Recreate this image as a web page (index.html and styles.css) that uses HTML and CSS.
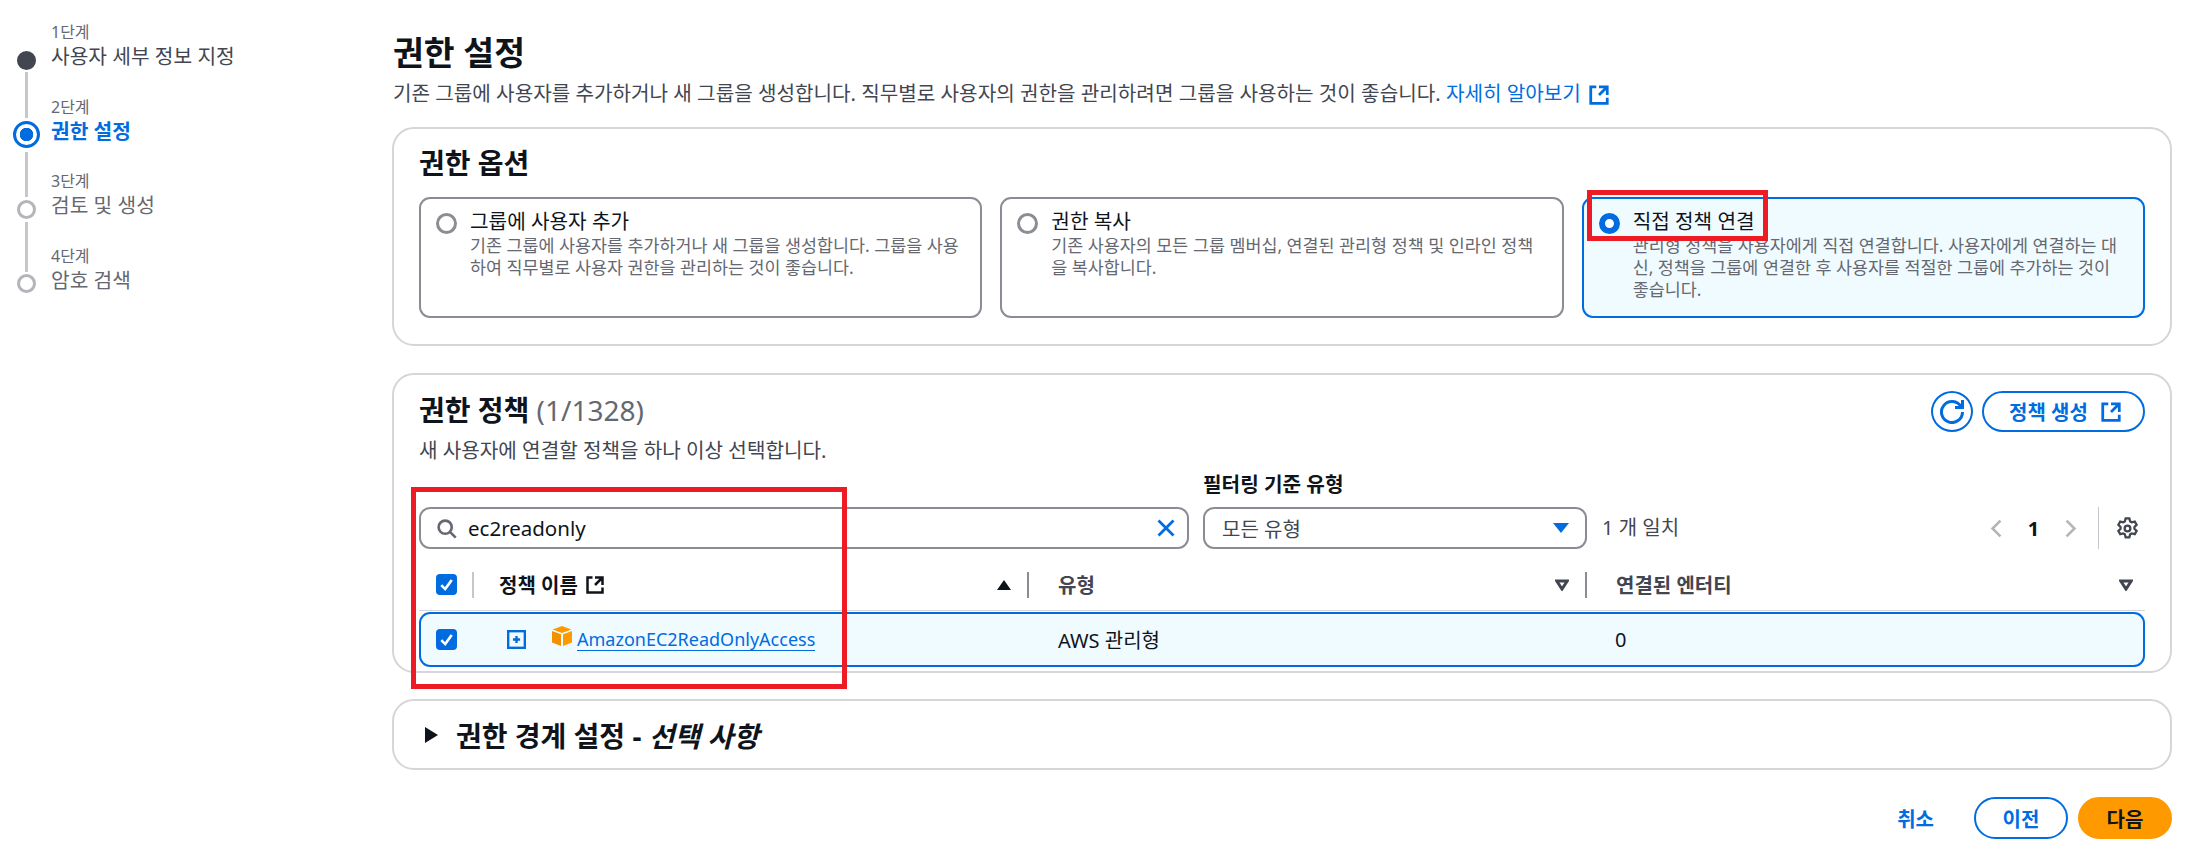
FILE: index.html
```html
<!DOCTYPE html>
<html lang="ko">
<head>
<meta charset="utf-8">
<title>권한 설정</title>
<link rel="stylesheet" href="styles.css">
</head>
<body>
<div class="page">
  <nav class="nav">
    <div class="step done">
      <div class="marker"><span class="line hidden"></span><span class="slot"><span class="dot"></span></span></div>
      <div class="step-text"><div class="step-label">1단계</div><div class="step-title">사용자 세부 정보 지정</div></div>
    </div>
    <div class="step current">
      <div class="marker"><span class="line"></span><span class="slot"><span class="dot"></span></span></div>
      <div class="step-text"><div class="step-label">2단계</div><div class="step-title">권한 설정</div></div>
    </div>
    <div class="step after-current">
      <div class="marker"><span class="line"></span><span class="slot"><span class="dot"></span></span></div>
      <div class="step-text"><div class="step-label">3단계</div><div class="step-title">검토 및 생성</div></div>
    </div>
    <div class="step">
      <div class="marker"><span class="line"></span><span class="slot"><span class="dot"></span></span></div>
      <div class="step-text"><div class="step-label">4단계</div><div class="step-title">암호 검색</div></div>
    </div>
  </nav>

  <main class="main">
    <h1 class="page-title">권한 설정</h1>
    <p class="page-sub">기존 그룹에 사용자를 추가하거나 새 그룹을 생성합니다. 직무별로 사용자의 권한을 관리하려면 그룹을 사용하는 것이 좋습니다. <a class="link">자세히 알아보기</a>
      <svg class="ext ext-link" viewBox="0 0 16 16"><path d="M14 8V2H8M14 2 8 8M6 2H2v12h12v-4"/></svg></p>

    <section class="card options">
      <h2 class="card-title">권한 옵션</h2>
      <div class="tiles">
        <div class="tile">
          <span class="radio"></span>
          <div><div class="tile-title">그룹에 사용자 추가</div><div class="tile-desc">기존 그룹에 사용자를 추가하거나 새 그룹을 생성합니다. 그룹을 사용하여 직무별로 사용자 권한을 관리하는 것이 좋습니다.</div></div>
        </div>
        <div class="tile">
          <span class="radio"></span>
          <div><div class="tile-title">권한 복사</div><div class="tile-desc">기존 사용자의 모든 그룹 멤버십, 연결된 관리형 정책 및 인라인 정책을 복사합니다.</div></div>
        </div>
        <div class="tile selected">
          <span class="radio"></span>
          <div><div class="tile-title">직접 정책 연결</div><div class="tile-desc">관리형 정책을 사용자에게 직접 연결합니다. 사용자에게 연결하는 대신, 정책을 그룹에 연결한 후 사용자를 적절한 그룹에 추가하는 것이 좋습니다.</div></div>
        </div>
      </div>
    </section>

    <section class="card policies">
      <div class="policies-head">
        <div>
          <h2 class="card-title">권한 정책 <span class="count">(1/1328)</span></h2>
          <p class="card-sub">새 사용자에 연결할 정책을 하나 이상 선택합니다.</p>
        </div>
        <div class="head-actions">
          <button class="btn btn-icon"><svg class="ext refresh" viewBox="0 0 16 16"><path d="M10 5h5V0M15 8a7 7 0 1 1-1-3.6"/></svg></button>
          <button class="btn btn-create">정책 생성 <svg class="ext" viewBox="0 0 16 16"><path d="M14 8V2H8M14 2 8 8M6 2H2v12h12v-4"/></svg></button>
        </div>
      </div>

      <div class="toolbar">
        <div class="field search">
          <svg class="search-icon" viewBox="0 0 16 16"><circle cx="7" cy="7" r="5"/><path d="m11 11 4 4"/></svg>
          <span class="search-value">ec2readonly</span>
          <svg class="clear-icon" viewBox="0 0 16 16"><path d="m2 2 12 12M14 2 2 14"/></svg>
        </div>
        <div class="filter">
          <label class="filter-label">필터링 기준 유형</label>
          <div class="field select"><span>모든 유형</span><span class="select-caret"></span></div>
        </div>
        <span class="matches">1 개 일치</span>
        <div class="pager">
          <svg class="chev" viewBox="0 0 16 16"><path d="m11 2-6 6 6 6"/></svg>
          <span class="page-num">1</span>
          <svg class="chev" viewBox="0 0 16 16"><path d="m5 2 6 6-6 6"/></svg>
          <span class="pager-sep"></span>
          <svg class="gear" viewBox="0 0 16 16"><path d="M6.73 1h2.54l.6 2.07 1.1.64 2.1-.52 1.27 2.2-1.5 1.55v1.27l1.5 1.55-1.27 2.2-2.1-.52-1.1.64-.6 2.07H6.73l-.6-2.07-1.1-.64-2.1.52-1.27-2.2 1.5-1.55V6.94l-1.5-1.55 1.27-2.2 2.1.52 1.1-.64z"/><circle cx="8" cy="8" r="2"/></svg>
        </div>
      </div>

      <div class="thead">
        <div class="col-check"><span class="checkbox"><svg viewBox="0 0 16 16"><path d="m4 8.5 3 3 5-7"/></svg></span><span class="sep sep-light"></span></div>
        <div class="col col-name"><span class="th dark">정책 이름</span><svg class="ext ext-th" viewBox="0 0 16 16"><path d="M14 8V2H8M14 2 8 8M6 2H2v12h12v-4"/></svg><span class="sort-up"></span><span class="sep"></span></div>
        <div class="col col-type"><span class="th">유형</span><svg class="sort-down" viewBox="0 0 12 10"><path d="M1.5 1.5h9L6 8.5z"/></svg><span class="sep"></span></div>
        <div class="col col-ent"><span class="th">연결된 엔터티</span><svg class="sort-down" viewBox="0 0 12 10"><path d="M1.5 1.5h9L6 8.5z"/></svg></div>
      </div>
      <div class="trow">
        <div class="col-check"><span class="checkbox"><svg viewBox="0 0 16 16"><path d="m4 8.5 3 3 5-7"/></svg></span></div>
        <div class="cell cell-name">
          <svg class="expand" viewBox="0 0 16 16"><rect x="1" y="1" width="14" height="14"/><path d="M8 5v6M5 8h6"/></svg>
          <svg class="cube" viewBox="0 0 22 22"><path fill="#f90" d="M11 1 20.5 4.6 11 8 1.5 4.6z"/><path fill="#f29100" d="M1 6 10 9.3V21L1 17.4z"/><path fill="#f90" d="M21 6 12 9.3V21l9-3.6z"/></svg>
          <a class="policy-link">AmazonEC2ReadOnlyAccess</a>
        </div>
        <div class="cell cell-type">AWS 관리형</div>
        <div class="cell cell-ent">0</div>
      </div>
    </section>

    <section class="card boundary">
      <span class="caret-right"></span>
      <h2 class="boundary-title">권한 경계 설정 - <em>선택 사항</em></h2>
    </section>

    <div class="footer">
      <a class="cancel">취소</a>
      <button class="btn btn-prev">이전</button>
      <button class="btn btn-next">다음</button>
    </div>
  </main>
</div>
<div class="mark mark-tile"></div>
<div class="mark mark-table"></div>
</body>
</html>
```
FILE: styles.css
```css
* { box-sizing: border-box; }
html, body { margin: 0; height: 100%; background: #fff; overflow: hidden; }
body { font-family: "Noto Sans", "Noto Sans CJK KR", sans-serif; color: #0f141a; font-size: 20px; }
h1, h2, p { margin: 0; }
button { font-family: inherit; cursor: pointer; padding: 0; }

.page { display: flex; height: 866px; }

.nav { width: 392px; flex: none; }
.step { display: flex; height: 74.67px; }
.step:first-child { height: 70px; }
.marker { width: 26px; margin-left: 13px; margin-right: 12px; display: flex; flex-direction: column; align-items: center; }
.line { flex: 1; width: 3px; background: #c6c6cd; margin-top: 3px; margin-bottom: 2px; }
.line.hidden { visibility: hidden; }
.current .line { margin-top: 2px; margin-bottom: 7px; }
.after-current .line { margin-top: 7px; }
.slot { height: 20px; flex: none; display: flex; align-items: center; justify-content: center; }
.dot { width: 19px; height: 19px; flex: none; border-radius: 50%; border: 3px solid #b4b4bb; background: #fff; }
.done .dot { background: #424650; border-color: #424650; }
.current .dot { width: 27px; height: 27px; border: 3px solid #006ce0; background: radial-gradient(circle, #006ce0 0 6.5px, #fff 7px); }
.step-text { padding-bottom: 2px; align-self: flex-end; white-space: nowrap; }
.step-label { font-size: 16px; line-height: 24px; color: #656871; }
.step-title { font-size: 20.3px; line-height: 24px; color: #656871; }
.done .step-title { color: #424650; }
.current .step-title { color: #006ce0; font-weight: 700; }

.main { flex: 1; padding-right: 34px; min-width: 0; }
.page-title { font-size: 33.5px; font-weight: 700; line-height: 40px; margin-top: 32px; padding-left: 1px; }
.page-sub { font-size: 20.15px; line-height: 26px; color: #424650; margin-top: 8px; height: 47px; white-space: nowrap; padding-left: 1px; }
.link { color: #006ce0; }
.ext { width: 22px; height: 22px; fill: none; stroke: currentColor; stroke-width: 2; flex: none; }
.ext-link { color: #006ce0; vertical-align: -5px; margin-left: 2px; }

.card { border: 2px solid #d5d5da; border-radius: 22px; background: #fff; }
.options { height: 219px; padding: 17px 25px 0; }
.card-title { font-size: 28px; font-weight: 700; line-height: 34px; }
.tiles { display: grid; grid-template-columns: repeat(3, 1fr); gap: 18px; margin-top: 17px; }
.tile { display: flex; gap: 13px; border: 2px solid #8c8c94; border-radius: 11px; padding: 9px 15px 16px; }
.tile.selected { border-color: #006ce0; background: #f0fbff; }
.radio { width: 21px; height: 21px; flex: none; margin-top: 5px; border-radius: 50%; border: 3px solid #8c8c94; background: #fff; }
.selected .radio { border: 6.5px solid #006ce0; }
.tile-title { font-size: 20.2px; line-height: 26px; }
.tile-desc { font-size: 17.4px; line-height: 22px; color: #656871; }

.policies { height: 300px; margin-top: 27px; padding: 18px 25px 0; }
.policies-head { display: flex; justify-content: space-between; height: 80px; }
.count { font-weight: 400; color: #656871; }
.card-sub { font-size: 20.15px; line-height: 26px; color: #424650; margin-top: 10px; }
.head-actions { display: flex; gap: 9px; margin-top: -2px; }
.btn { border: 2px solid #006ce0; border-radius: 22px; background: #fff; color: #006ce0; font-size: 20px; font-weight: 700; height: 41px; }
.btn-icon { width: 42px; display: flex; align-items: center; justify-content: center; border-radius: 50%; }
.refresh { width: 24px; height: 24px; }
.btn-create { width: 163px; display: flex; align-items: center; justify-content: center; gap: 12px; padding-left: 4px; }

.toolbar { display: flex; align-items: flex-end; height: 76px; }
.field { height: 42px; border: 2px solid #8c8c94; border-radius: 11px; display: flex; align-items: center; background: #fff; }
.search { width: 770px; padding: 0 11px 0 16px; }
.search-icon { width: 21px; height: 21px; fill: none; stroke: #656871; stroke-width: 2; flex: none; margin-left: -1px; }
.search-value { flex: 1; font-size: 20.5px; margin-left: 11px; }
.clear-icon { width: 20px; height: 20px; fill: none; stroke: #006ce0; stroke-width: 2.2; }
.filter { margin-left: 14px; width: 384px; }
.filter-label { display: block; font-size: 20.2px; font-weight: 700; line-height: 24px; margin-bottom: 11px; }
.select { padding: 0 16px 0 17px; justify-content: space-between; font-size: 20px; color: #424650; }
.select-caret { width: 0; height: 0; border-left: 8px solid transparent; border-right: 8px solid transparent; border-top: 10px solid #006ce0; }
.matches { margin-left: 15px; font-size: 20px; line-height: 42px; color: #424650; white-space: nowrap; }
.pager { margin-left: auto; display: flex; align-items: center; height: 42px; }
.chev { width: 21px; height: 21px; fill: none; stroke: #b4b4bb; stroke-width: 2; }
.page-num { width: 53px; text-align: center; font-size: 20px; font-weight: 700; }
.pager-sep { width: 1px; height: 42px; background: #c6c6cd; margin: 0 17px 0 17px; }
.gear { width: 23px; height: 23px; fill: none; stroke: #424650; stroke-width: 1.6; margin-right: 6px; }

.thead { display: flex; height: 62px; padding-top: 10px; align-items: center; border-bottom: 1px solid #d5d5da; }
.col-check { width: 53px; flex: none; display: flex; align-items: center; padding-left: 17px; height: 100%; }
.checkbox { width: 21px; height: 21px; border-radius: 4px; background: #006ce0; display: flex; flex: none; }
.checkbox svg { fill: none; stroke: #fff; stroke-width: 2; }
.sep { width: 2px; height: 26px; background: #8c8c94; flex: none; }
.sep-light { margin-left: 15px; background: #c6c6cd; }
.col { flex: 1; display: flex; align-items: center; padding-left: 29px; height: 100%; }
.col-name { flex: none; width: 557px; padding-left: 27px; }
.col-type { flex: none; width: 558px; }
.th { font-size: 20px; font-weight: 700; color: #424650; }
.th.dark { color: #0f141a; }
.ext-th { width: 20px; height: 20px; margin-left: 7px; }
.sort-up { margin-left: auto; margin-right: 16px; width: 0; height: 0; border-left: 7px solid transparent; border-right: 7px solid transparent; border-bottom: 10px solid #0f141a; }
.sort-down { margin-left: auto; margin-right: 16px; width: 14px; height: 12px; fill: none; stroke: #424650; stroke-width: 2.5; }
.col-ent .sort-down { margin-right: 12px; }

.trow { display: flex; height: 55px; margin-top: 1px; border: 2px solid #006ce0; border-radius: 11px; background: #f0fbff; align-items: center; }
.trow .col-check { padding-left: 15px; }
.cell { font-size: 20px; }
.cell-name { width: 557px; flex: none; display: flex; align-items: center; padding-left: 33px; }
.cell-type { width: 558px; flex: none; padding-left: 27px; }
.cell-ent { padding-left: 26px; }
.expand { width: 19px; height: 19px; fill: none; stroke: #006ce0; stroke-width: 2; }
.cube { width: 22px; height: 22px; margin-left: 25px; margin-top: -8px; }
.policy-link { color: #006ce0; margin-left: 4px; font-size: 18px; border-bottom: 1px solid #006ce0; line-height: 22px; }

.boundary { height: 71px; margin-top: 26px; display: flex; align-items: center; padding-left: 31px; }
.caret-right { width: 0; height: 0; border-top: 8px solid transparent; border-bottom: 8px solid transparent; border-left: 13px solid #0f141a; }
.boundary-title { font-size: 28px; font-weight: 700; margin-left: 18px; }
.boundary-title em { font-style: italic; }

.footer { display: flex; justify-content: flex-end; align-items: center; gap: 10px; margin-top: 27px; }
.cancel { color: #006ce0; font-weight: 700; font-size: 20px; margin-right: 30px; }
.btn-prev, .btn-next { width: 94px; height: 42px; }
.btn-next { background: #f90; border-color: #f90; color: #0f141a; }

.mark { position: absolute; border: 5px solid #ed1c24; pointer-events: none; }
.mark-tile { left: 1587px; top: 190px; width: 181px; height: 51px; }
.mark-table { left: 411px; top: 487px; width: 436px; height: 202px; }
```
